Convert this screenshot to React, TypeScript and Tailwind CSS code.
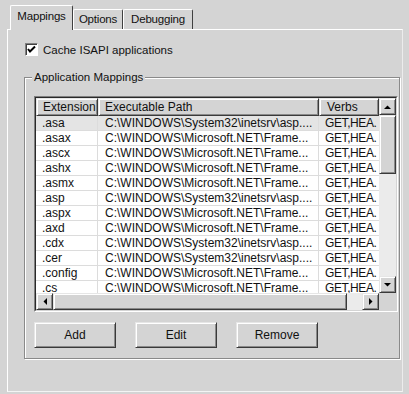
import React from "react";

const SYS = "C:\\WINDOWS\\System32\\inetsrv\\asp....";
const NET = "C:\\WINDOWS\\Microsoft.NET\\Frame...";

const rows: [string, string][] = [
  [".asa", SYS],
  [".asax", NET],
  [".ascx", NET],
  [".ashx", NET],
  [".asmx", NET],
  [".asp", SYS],
  [".aspx", NET],
  [".axd", NET],
  [".cdx", SYS],
  [".cer", SYS],
  [".config", NET],
  [".cs", NET],
];

const raised =
  "border border-t-[#e6e6e6] border-l-[#e6e6e6] border-b-[#3a3a3a] border-r-[#3a3a3a] shadow-[inset_1px_1px_0_#ffffff,inset_-1px_-1px_0_#8a8a8a]";

function Arrow({ dir }: { dir: "up" | "down" | "left" | "right" }) {
  const pts = {
    up: "0,4 7,4 3.5,0.5",
    down: "0,0 7,0 3.5,3.5",
    left: "4,0 4,7 0.5,3.5",
    right: "0,0 0,7 3.5,3.5",
  }[dir];
  const vertical = dir === "up" || dir === "down";
  return (
    <svg width={vertical ? 7 : 4} height={vertical ? 4 : 7} viewBox={vertical ? "0 0 7 4" : "0 0 4 7"}>
      <polygon points={pts} fill="#000" />
    </svg>
  );
}

function ScrollButton({ dir }: { dir: "up" | "down" | "left" | "right" }) {
  return (
    <div className={`flex h-[17px] w-[17px] shrink-0 items-center justify-center bg-[#d4d4d4] ${raised}`}>
      <Arrow dir={dir} />
    </div>
  );
}

function Tab({ label, width, active }: { label: string; width: string; active?: boolean }) {
  return (
    <div
      className={
        active
          ? `relative z-10 -mb-px flex h-[25px] items-start justify-center rounded-t-[2px] border-l border-t border-r border-l-white border-t-white border-r-[#404040] bg-[#d4d4d4] pt-[3px] ${width}`
          : `flex h-[20px] items-start justify-center rounded-t-[2px] border-l border-t border-r border-l-white border-t-white border-r-[#404040] bg-[#d4d4d4] pt-[2px] ${width}`
      }
    >
      <span className="text-[11.5px] leading-[14px] tracking-[-0.2px]">{label}</span>
    </div>
  );
}

function Button({ label }: { label: string }) {
  return (
    <div className={`flex h-[26px] w-[82px] items-center justify-center bg-[#d4d4d4] ${raised}`}>
      {label}
    </div>
  );
}

export default function App() {
  return (
    <div className="relative flex h-[394px] w-[409px] flex-col overflow-hidden bg-[#d4d4d4] font-['Liberation_Sans',Arial,sans-serif] text-[12px] text-[#111]">
      {/* Tabs */}
      <div className="flex h-[29px] shrink-0 items-end pl-[10px]">
        <Tab label="Mappings" width="w-[63px]" active />
        <Tab label="Options" width="w-[50px]" />
        <Tab label="Debugging" width="w-[70px]" />
      </div>

      {/* Tab panel */}
      <div className="ml-[7px] flex w-[396px] flex-1 flex-col border border-t-white border-l-white border-r-[#ececec] border-b-[#f4f4f4] pl-[16px] pr-[2px] pt-[13px]">
        {/* Checkbox */}
        <div className="ml-[1px] flex h-[13px] items-center gap-[5px]">
          <div className="flex h-[13px] w-[13px] items-center justify-center border border-t-[#808080] border-l-[#808080] border-b-white border-r-white bg-white shadow-[inset_1px_1px_0_#404040]">
            <svg width="9" height="9" viewBox="0 0 9 9">
              <polyline points="1,4 3,6.5 8,1.5" fill="none" stroke="#000" strokeWidth="2" />
            </svg>
          </div>
          <span className="text-[11.5px] leading-[14px]">Cache ISAPI applications</span>
        </div>

        {/* Group box */}
        <div className="relative mt-[21px] border border-[#8a8a8a] pb-[10px] pl-[9px] pr-[1px] pt-[18px] shadow-[inset_1px_1px_0_#ffffff,1px_1px_0_#ffffff]">
          <span className="absolute -top-[8px] left-[7px] bg-[#d4d4d4] px-[2px] text-[11.5px] leading-[14px]">
            Application Mappings
          </span>

          {/* List view */}
          <div className="h-[216px] border border-t-[#808080] border-l-[#808080] border-b-white border-r-white">
            <div className="flex h-full flex-col border border-t-[#2a2a2a] border-l-[#2a2a2a] border-b-[#d4d4d4] border-r-[#d4d4d4] bg-white">
              <div className="flex min-h-0 flex-1">
                <div className="flex min-w-0 flex-1 flex-col overflow-hidden">
                  {/* Header */}
                  <div className="flex h-[18px] shrink-0">
                    <div className={`w-[62px] bg-[#d4d4d4] pl-[6px] pt-[1px] leading-[14px] ${raised}`}>Extension</div>
                    <div className={`w-[221px] bg-[#d4d4d4] pl-[6px] pt-[1px] leading-[14px] ${raised}`}>Executable Path</div>
                    <div className={`flex-1 bg-[#d4d4d4] pl-[7px] pt-[1px] leading-[14px] ${raised}`}>Verbs</div>
                  </div>
                  {rows.map(([ext, path], i) => (
                    <div
                      key={ext}
                      className={`flex h-[15px] shrink-0 border-b border-[#dcdcdc] leading-[14px] ${i === 0 ? "bg-[#e4e4e4]" : "bg-white"}`}
                    >
                      <div className="w-[62px] overflow-hidden whitespace-nowrap border-r border-[#dcdcdc] pl-[6px]">{ext}</div>
                      <div className="w-[221px] overflow-hidden whitespace-nowrap border-r border-[#dcdcdc] pl-[7px]">{path}</div>
                      <div className="flex-1 whitespace-nowrap pl-[6px] tracking-[-0.4px]">GET,HEA.</div>
                    </div>
                  ))}
                </div>

                {/* Vertical scrollbar */}
                <div className="flex w-[17px] shrink-0 flex-col bg-[#ebebeb]">
                  <ScrollButton dir="up" />
                  <div className={`h-[59px] w-[17px] bg-[#d4d4d4] ${raised}`} />
                  <div className="flex-1" />
                  <ScrollButton dir="down" />
                </div>
              </div>

              {/* Horizontal scrollbar */}
              <div className="flex h-[17px] shrink-0">
                <ScrollButton dir="left" />
                <div className="flex flex-1 bg-[#ebebeb]">
                  <div className={`h-[17px] w-[294px] bg-[#d4d4d4] ${raised}`} />
                </div>
                <ScrollButton dir="right" />
                <div className="w-[17px] bg-[#d4d4d4]" />
              </div>
            </div>
          </div>

          {/* Buttons */}
          <div className="mt-[10px] flex gap-[19px]">
            <Button label="Add" />
            <Button label="Edit" />
            <Button label="Remove" />
          </div>
        </div>
      </div>
      <div className="h-[2px] shrink-0" />
    </div>
  );
}
